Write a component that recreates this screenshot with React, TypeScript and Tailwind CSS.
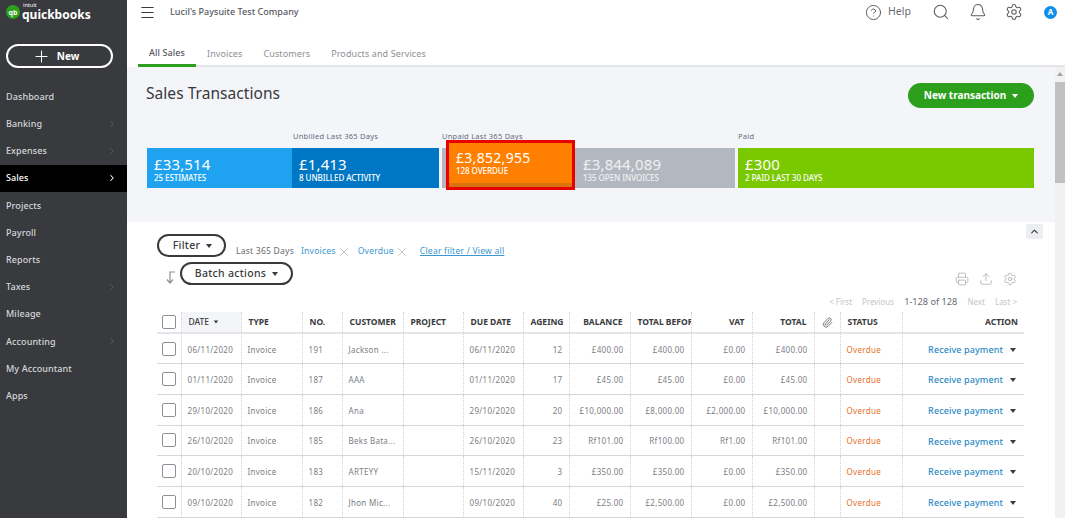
import React from "react";
import { ChevronRight, ChevronUp, Search, Bell, Settings, Printer, Upload, Paperclip, X, Plus, Menu, CircleHelp } from "lucide-react";

const nav = [
  ["Dashboard", false], ["Banking", true], ["Expenses", true], ["Sales", true], ["Projects", false], ["Payroll", false],
  ["Reports", false], ["Taxes", true], ["Mileage", false], ["Accounting", true], ["My Accountant", false], ["Apps", false],
] as const;

const rows = [
  ["06/11/2020", "191", "Jackson ...", "06/11/2020", "12", "£400.00", "£400.00", "£0.00", "£400.00"],
  ["01/11/2020", "187", "AAA", "01/11/2020", "17", "£45.00", "£45.00", "£0.00", "£45.00"],
  ["29/10/2020", "186", "Ana", "29/10/2020", "20", "£10,000.00", "£8,000.00", "£2,000.00", "£10,000.00"],
  ["26/10/2020", "185", "Beks Bata...", "26/10/2020", "23", "Rf101.00", "Rf100.00", "Rf1.00", "Rf101.00"],
  ["20/10/2020", "183", "ARTEYY", "15/11/2020", "3", "£350.00", "£350.00", "£0.00", "£350.00"],
  ["09/10/2020", "182", "Jhon Mic...", "09/10/2020", "40", "£25.00", "£2,500.00", "£0.00", "£2,500.00"],
];

const Caret = ({ className = "" }: { className?: string }) => (
  <span className={"inline-block w-0 h-0 border-x-[3.5px] border-x-transparent border-t-[4px] border-t-current " + className} />
);

function Stat({ amount, label, className }: { amount: string; label: string; className: string }) {
  return (
    <div className={"h-[40px] pl-[7px] pt-[7px] text-white leading-none " + className}>
      <div className="text-[15px] tracking-[0.15px] leading-[18px]">{amount}</div>
      <div className="text-[8px] font-medium tracking-[-0.05px] leading-[9px]">{label}</div>
    </div>
  );
}

const th = "h-[21px] border-l border-dotted border-[#d0d0d0] text-[8.5px] font-bold text-[#393a3d] px-[7px] whitespace-nowrap overflow-hidden";
const td = "h-[30.7px] pt-[2px] border-l border-dotted border-[#d0d0d0] text-[8px] tracking-[0.3px] text-[#7c7d83] px-[6px] whitespace-nowrap overflow-hidden";

export default function App() {
  return (
    <div className="flex h-[518px] w-[1065px] overflow-hidden bg-white font-['Lato',sans-serif]">
      <aside className="w-[127px] shrink-0 bg-[#393a3d] text-white">
        <div className="flex h-[44px] pl-[6px] pt-[3px] items-start">
          <div className="w-[14px] h-[14px] rounded-full bg-[#2ca01c] flex items-center justify-center text-[7px] font-bold leading-none mt-[2px]">qb</div>
          <div className="ml-[2px] leading-none">
            <div className="text-[5.5px] h-[5px] leading-[5px] pl-[1px]">intuit</div>
            <div className="text-[12px] font-bold leading-[14px]">quickbooks</div>
          </div>
        </div>
        <div className="mx-[6px] w-[107px] h-[24px] rounded-full border-2 border-white flex items-center justify-center gap-[6px] pr-[8px]">
          <Plus size={19} strokeWidth={1.3} />
          <span className="text-[10px] font-bold">New</span>
        </div>
        <nav className="mt-[15px]">
          {nav.map(([name, arrow]) => {
            const on = name === "Sales";
            return (
              <div key={name} className={"h-[27.2px] flex items-center justify-between pl-[6px] pr-[10px] text-[9px] font-medium tracking-[0.1px] " + (on ? "bg-black text-white font-bold" : "text-[#d4d7dc]")}>
                <span>{name}</span>
                {arrow && <ChevronRight size={10} strokeWidth={on ? 2.5 : 1.5} className={on ? "text-white" : "text-[#6b6c72]"} />}
              </div>
            );
          })}
        </nav>
      </aside>

      <main className="flex-1 min-w-0 flex flex-col">
        <header className="h-[40px] flex items-start shrink-0 pt-[6px]">
          <Menu size={17} strokeWidth={1.6} className="ml-[12px] mt-[-2px] text-[#393a3d]" />
          <span className="ml-[14px] text-[9px] font-medium tracking-[0.03px] text-[#565862] mt-[-1px]">Lucil's Paysuite Test Company</span>
          <div className="ml-auto flex items-center text-[#5c5d62] mt-[-3px]">
            <CircleHelp size={17} strokeWidth={1.4} />
            <span className="ml-[6px] text-[10.5px] text-[#6b6c72] w-[22px]">Help</span>
            <Search size={18} strokeWidth={1.4} className="ml-[22px]" />
            <Bell size={18} strokeWidth={1.4} className="ml-[19px]" />
            <Settings size={18} strokeWidth={1.4} className="ml-[18px]" />
            <span className="ml-[21px] mr-[8px] w-[13px] h-[13px] rounded-full bg-[#0d8ee9] text-white text-[8px] font-bold flex items-center justify-center">A</span>
          </div>
        </header>

        <div className="h-[27px] shrink-0 flex border-b-2 border-[#e3e5e8] ml-[11px] text-[9px] tracking-[0.1px] text-[#8d9096]">
          <div className="h-[27px] w-[58px] border-b-[3px] border-[#2ca01c] flex items-center justify-center font-medium text-[#565862] pt-[2px]">All Sales</div>
          <div className="ml-[11px] h-[25px] pt-[2px] flex items-center">Invoices</div>
          <div className="ml-[21px] h-[25px] pt-[2px] flex items-center">Customers</div>
          <div className="ml-[21px] h-[25px] pt-[2px] flex items-center">Products and Services</div>
        </div>

        <div className="flex-1 min-h-0 flex">
          <div className="w-[928px] min-w-0">
            <section className="h-[155px] bg-[#f4f5f8] px-[20px] relative">
              <div className="flex items-start justify-between pr-[1px] h-[65px]">
                <h1 className="text-[15.5px] text-[#393a3d] tracking-[0.05px] mt-[14px] ml-[-1px] leading-[24px]">Sales Transactions</h1>
                <button className="mt-[16px] w-[126px] h-[25px] rounded-full bg-[#2ca01c] text-white text-[10px] font-bold flex items-center justify-center gap-[6px]">
                  New transaction <Caret />
                </button>
              </div>
              <div className="flex">
                <div className="w-[292px]">
                  <div className="h-[16px] pl-[146px] text-[7.5px] tracking-[0.25px] text-[#5f6b7a] leading-[8px]">Unbilled Last 365 Days</div>
                  <div className="flex">
                    <Stat amount="£33,514" label="25 ESTIMATES" className="w-[145px] bg-[#1fa3f0]" />
                    <Stat amount="£1,413" label="8 UNBILLED ACTIVITY" className="w-[147px] bg-[#0077c5]" />
                  </div>
                </div>
                <div className="w-[293px] ml-[3px]">
                  <div className="h-[16px] text-[7.5px] tracking-[0.25px] text-[#5f6b7a] leading-[8px]">Unpaid Last 365 Days</div>
                  <div className="flex bg-[#b3b8c0] h-[40px]">
                    <div className="ml-[4px] w-[129px] h-[50px] -mt-[8px] mb-[-2px] border-[3px] border-[#e60000] bg-[#ff8000] text-white pl-[7px] pt-[6px] relative shadow-[inset_0_-4px_0_#d9730d]">
                      <div className="text-[14px] tracking-[0.3px] leading-[17px]">£3,852,955</div>
                      <div className="text-[8px] font-medium leading-[10px] tracking-[-0.05px]">128 OVERDUE</div>
                    </div>
                    <div className="pl-[8px] pt-[7px] text-white">
                      <div className="text-[15px] tracking-[0.15px] leading-[18px] opacity-80">£3,844,089</div>
                      <div className="text-[8px] font-medium leading-[9px] tracking-[-0.05px] opacity-80">135 OPEN INVOICES</div>
                    </div>
                  </div>
                </div>
                <div className="w-[296px] ml-[3px]">
                  <div className="h-[16px] text-[7.5px] tracking-[0.25px] text-[#5f6b7a] leading-[8px]">Paid</div>
                  <Stat amount="£300" label="2 PAID LAST 30 DAYS" className="bg-[#7ac900]" />
                </div>
              </div>
            </section>

            <section className="relative pl-[30px] pt-[12px]">
              <div className="absolute right-[12px] top-[2px] w-[17px] h-[15px] bg-[#eceef1] rounded-[2px] flex items-center justify-center text-[#393a3d]">
                <ChevronUp size={11} strokeWidth={2.5} />
              </div>
              <div className="flex items-center h-[23px] text-[8.6px] tracking-[0.2px]">
                <button className="w-[69px] h-[23px] rounded-full border-2 border-[#393a3d] text-[#393a3d] text-[10.5px] tracking-[0.3px] font-medium flex items-center justify-center gap-[6px] pl-[2px]">
                  Filter <Caret />
                </button>
                <span className="ml-[10px] mt-[12px] text-[#6b6c72]">Last 365 Days</span>
                <span className="ml-[7px] mt-[12px] text-[#3b97d3] flex items-center gap-[1px]">Invoices <X size={14} strokeWidth={0.9} className="text-[#8d9096]" /></span>
                <span className="ml-[7px] mt-[12px] text-[#3b97d3] flex items-center gap-[1px]">Overdue <X size={14} strokeWidth={0.9} className="text-[#8d9096]" /></span>
                <span className="ml-[11px] mt-[12px] text-[#3b97d3] underline">Clear filter / View all</span>
              </div>
              <div className="flex items-start h-[27px] mt-[5px]">
                <svg width="14" height="14" viewBox="0 0 14 14" fill="none" stroke="#8d9096" strokeWidth="1.2" className="mt-[8px] ml-[6px] mr-[3px]">
                  <path d="M7 13V2H12M4 9.5L7 13L10 9.5" />
                </svg>
                <button className="w-[113px] h-[23px] rounded-full border-2 border-[#393a3d] text-[#393a3d] text-[10.5px] tracking-[0.3px] font-medium flex items-center justify-center gap-[6px]">
                  Batch actions <Caret />
                </button>
                <div className="ml-auto flex gap-[10px] mr-[38px] mt-[10px] text-[#a8abb0]">
                  <Printer size={14} strokeWidth={1.3} />
                  <Upload size={14} strokeWidth={1.3} />
                  <Settings size={14} strokeWidth={1.3} />
                </div>
              </div>
              <div className="h-[23px] pt-[3px] flex items-center justify-end pr-[38px] text-[8px] text-[#c4c6ca] gap-[10px]">
                <span>&lt; First</span><span>Previous</span>
                <span className="text-[#6b6c72] text-[9.2px]">1-128 of 128</span>
                <span>Next</span><span>Last &gt;</span>
              </div>
              <table className="table-fixed border-collapse w-[867px] text-left">
                <thead>
                  <tr className="border-b-2 border-[#e3e5e8]">
                    <th className="w-[24px] h-[21px] pl-[5px]"><span className="block w-[14px] h-[14px] border border-[#8d9096] rounded-[2px] bg-white" /></th>
                    <th className={th + " w-[60px] bg-[#f4f5f8] !font-medium text-[#5f6066]"}>DATE <Caret className="ml-[2px] mb-[1px] scale-75" /></th>
                    <th className={th + " w-[61px]"}>TYPE</th>
                    <th className={th + " w-[40px]"}>NO.</th>
                    <th className={th + " w-[61px]"}>CUSTOMER</th>
                    <th className={th + " w-[60px]"}>PROJECT</th>
                    <th className={th + " w-[60px]"}>DUE DATE</th>
                    <th className={th + " w-[46px]"}>AGEING</th>
                    <th className={th + " w-[61px] text-right"}>BALANCE</th>
                    <th className={th + " w-[61px] !pr-0"}>TOTAL BEFOR</th>
                    <th className={th + " w-[61px] text-right"}>VAT</th>
                    <th className={th + " w-[62px] text-right"}>TOTAL</th>
                    <th className={th + " w-[26px] !px-[7px]"}><Paperclip size={11} className="text-[#6b6c72]" /></th>
                    <th className={th + " w-[62px]"}>STATUS</th>
                    <th className={th + " w-[122px] text-right !pr-[6px]"}>ACTION</th>
                  </tr>
                </thead>
                <tbody>
                  {rows.map((r) => (
                    <tr key={r[1]} className="border-b border-[#d4d7dc]">
                      <td className="h-[30.7px] pl-[5px]"><span className="block w-[14px] h-[14px] border border-[#8d9096] rounded-[2px] bg-white" /></td>
                      <td className={td}>{r[0]}</td>
                      <td className={td}>Invoice</td>
                      <td className={td}>{r[1]}</td>
                      <td className={td}>{r[2]}</td>
                      <td className={td}></td>
                      <td className={td}>{r[3]}</td>
                      <td className={td + " text-right"}>{r[4]}</td>
                      <td className={td + " text-right"}>{r[5]}</td>
                      <td className={td + " text-right"}>{r[6]}</td>
                      <td className={td + " text-right"}>{r[7]}</td>
                      <td className={td + " text-right"}>{r[8]}</td>
                      <td className={td}></td>
                      <td className={td + " !text-[#e8702a]"}>Overdue</td>
                      <td className={td + " !text-[#2b8ac6] text-right !pr-[8px] font-medium !tracking-[0.1px]"}>
                        <span className="text-[9px] mr-[7px]">Receive payment</span><Caret className="text-[#393a3d] mb-[1px]" />
                      </td>
                    </tr>
                  ))}
                </tbody>
              </table>
            </section>
          </div>
          <div className="w-[10px] bg-[#f1f1f1] flex flex-col items-center">
            <span className="mt-[5px] w-0 h-0 border-x-[3px] border-x-transparent border-b-[4px] border-b-[#a3a3a3]" />
            <div className="mt-[6px] w-full h-[101px] bg-[#c1c1c1]" />
          </div>
        </div>
      </main>
    </div>
  );
}
